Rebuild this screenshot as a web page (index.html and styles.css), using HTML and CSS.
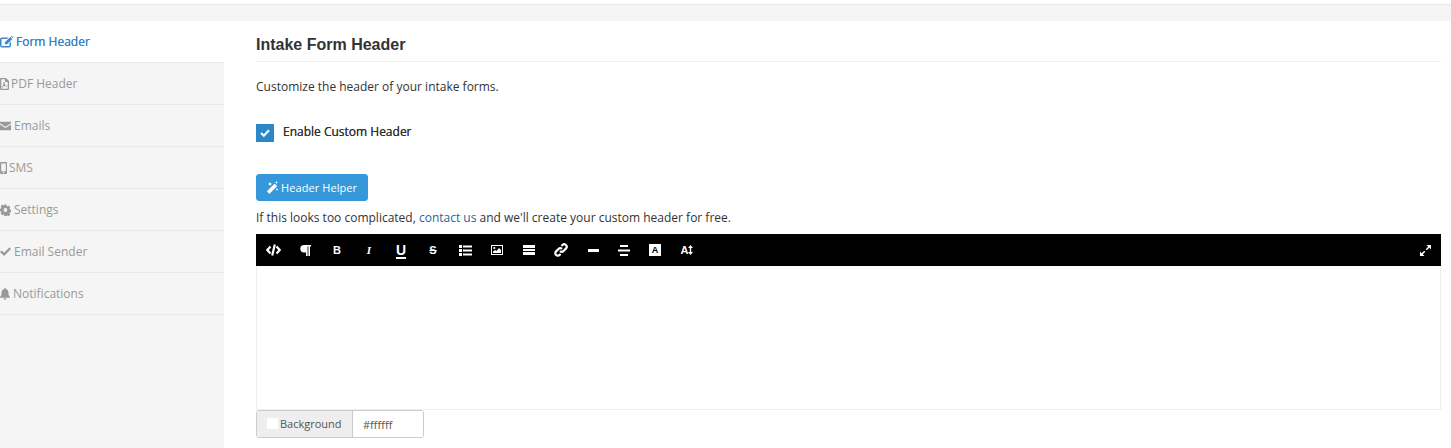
FILE: index.html
```html
<!DOCTYPE html>
<html lang="en">
<head>
  <meta charset="UTF-8" />
  <meta name="viewport" content="width=device-width, initial-scale=1" />
  <title>Intake Form Header</title>
  <link rel="stylesheet" href="styles.css">
</head>
<body>

  <div class="topbar"></div>

  <div class="page">

    <!-- Sidebar -->
    <ul class="side-nav">
      <li class="active">
        <svg class="side-icon" width="13" height="12" viewBox="0 0 13 12"><path fill-rule="evenodd" d="M2 1.500h6.500L7 3H2a.5.5 0 0 0-.5.500v6A.5.500 0 0 0 2 10h7a.5.500 0 0 0 .5-.500V7l1.500-1.500V9.500A2 2 0 0 1 9 11.500H2a2 2 0 0 1-2-2v-6a2 2 0 0 1 2-2z"/><path d="M10.300.9l2 2L7 8.300H4.900V6.200zM10.900.3l.3-.3h.8l1 1v.8l-.3.3z"/></svg>
        <span>Form Header</span>
      </li>
      <li class="gap-tight">
        <svg class="side-icon" width="9" height="12" viewBox="0 0 9 12"><path fill-rule="evenodd" d="M1 0h5l3 3v8a1 1 0 0 1-1 1H1a1 1 0 0 1-1-1V1a1 1 0 0 1 1-1zm.3 1.300v9.400h6.400V4H5V1.300zM4.500 4.500c.6 0 .6 1 .3 2 .4.800 1 1.200 1.600 1.300.4 0 .6.300.4.600-.3.400-1.200.1-2-.5-.7.100-1.300.3-1.800.5-.5 1-1 1.400-1.300 1.100-.3-.4.300-1 1-1.400.3-.6.600-1.200.8-1.800-.3-.9-.3-2.300 0-2.300z"/></svg>
        <span>PDF Header</span>
      </li>
      <li>
        <svg class="side-icon" width="11" height="12" viewBox="0 0 11 12"><path d="M0 1.800h11v1.400L5.500 6.800 0 3.200zM0 4.400l5.500 3.600L11 4.400v5.800H0z"/></svg>
        <span>Emails</span>
      </li>
      <li class="gap-tight">
        <svg class="side-icon" width="7" height="12" viewBox="0 0 7 12"><path fill-rule="evenodd" d="M1 0h5a1 1 0 0 1 1 1v10a1 1 0 0 1-1 1H1a1 1 0 0 1-1-1V1a1 1 0 0 1 1-1zm.2 1.500v7.800h4.600V1.500zM3.500 9.800a.8.800 0 1 0 0 1.600.8.800 0 0 0 0-1.600z"/></svg>
        <span>SMS</span>
      </li>
      <li>
        <svg class="side-icon" width="11" height="12" viewBox="0 0 11 12"><path fill-rule="evenodd" d="M4.300.5h2.400l.3 1.500.9.400 1.300-.8 1.600 1.600-.8 1.300.4.900 1.500.3v2.400l-1.500.3-.4.900.8 1.300-1.600 1.600-1.300-.8-.9.400-.3 1.500H4.300L4 10.800l-.9-.4-1.300.8L.2 9.600 1 8.300.6 7.400-.9 7.100V4.700l1.500-.3L1 3.500.2 2.200 1.800.6l1.300.8.900-.4zM5.500 4a2 2 0 1 0 0 4 2 2 0 0 0 0-4z" transform="translate(.5 0) scale(.9 1)"/></svg>
        <span>Settings</span>
      </li>
      <li>
        <svg class="side-icon" width="11" height="12" viewBox="0 0 11 12"><path d="M0 6l1.600-1.600L4 6.800 9.400 1.500 11 3.100 4 10z"/></svg>
        <span>Email Sender</span>
      </li>
      <li>
        <svg class="side-icon" width="10" height="12" viewBox="0 0 10 12"><path d="M5 0a.8.800 0 0 1 .8.900C7.600 1.300 8.500 2.800 8.500 5c0 2.200.6 3.200 1.500 4v.8H0V9c.9-.8 1.500-1.800 1.500-4 0-2.200.9-3.700 2.700-4.100A.8.800 0 0 1 5 0zM3.700 10.300h2.600A1.300 1.300 0 0 1 5 11.800a1.300 1.300 0 0 1-1.300-1.500z"/></svg>
        <span>Notifications</span>
      </li>
    </ul>

    <!-- Main -->
    <div class="content">
      <h2 class="title">Intake Form Header</h2>
      <p class="intro">Customize the header of your intake forms.</p>

      <div class="check-row">
        <span class="checkbox">
          <svg width="10" height="8" viewBox="0 0 10 8"><path d="M1 4l2.800 2.800L9 1.300" fill="none" stroke="#fff" stroke-width="2"/></svg>
        </span>
        <label>Enable Custom Header</label>
      </div>

      <button class="helper-btn">
        <svg width="13" height="13" viewBox="0 0 13 13" fill="#fff"><path d="M9 3l1.800 1.800a.6.6 0 0 1 0 .8L3.800 12.600a.6.600 0 0 1-.8 0L1.200 10.800a.6.600 0 0 1 0-.8L8.200 3a.6.600 0 0 1 .8 0z"/><path d="M4 1l.7 1.300L6 3l-1.300.7L4 5l-.7-1.300L2 3l1.300-.7zM10.500 0l.5.9.9.5-.9.500-.5.900-.5-.9-.9-.5.9-.5zM11 7l.5.9.9.500-.9.500-.5.900-.5-.9-.9-.5.900-.5z"/></svg>
        Header Helper
      </button>

      <p class="help">If this looks too complicated, <a href="#">contact us</a> and we'll create your custom header for free.</p>

      <!-- Editor -->
      <div class="toolbar">
        <span class="tool"><svg width="15" height="12" viewBox="0 0 15 12"><path d="M4.500 2.500L1.300 6l3.200 3.500M10.500 2.500L13.700 6l-3.200 3.500M8.800.5L6.200 11.500" fill="none" stroke="#fff" stroke-width="2.200"/></svg></span>
        <span class="tool"><svg width="11" height="11" viewBox="0 0 11 11" fill="#fff"><path d="M4 0h7v1.600h-1V11H8.400V1.600H7.600V11H6V7.400H4A3.700 3.700 0 0 1 4 0z"/></svg></span>
        <span class="tool tool-letter tool-bold">B</span>
        <span class="tool tool-letter tool-italic">I</span>
        <span class="tool tool-letter tool-under">U</span>
        <span class="tool tool-letter tool-strike">S</span>
        <span class="tool"><svg width="13" height="11" viewBox="0 0 13 11" fill="#fff"><path d="M0 0h3v3H0zM0 4h3v3H0zM0 8h3v3H0zM4 .5h9v2H4zM4 4.500h9v2H4zM4 8.500h9v2H4z"/></svg></span>
        <span class="tool"><svg width="12" height="10" viewBox="0 0 12 10"><path fill="#fff" fill-rule="evenodd" d="M0 0h12v10H0zm1 1v8h10V1z"/><path fill="#fff" d="M2 8V6.500L4 5l1.500 1L8 3l2 2v3z"/><circle cx="3.300" cy="3" r="1.100" fill="#fff"/></svg></span>
        <span class="tool"><svg width="12" height="10" viewBox="0 0 12 10" fill="#fff"><path d="M0 0h12v3H0zM0 4h12v2H0zM0 7h12v3H0z"/></svg></span>
        <span class="tool"><svg width="14" height="14" viewBox="0 0 14 14" fill="none" stroke="#fff" stroke-width="2.200"><path d="M6 8a2.500 2.500 0 0 0 3.500 0l2.400-2.400A2.500 2.500 0 0 0 8.400 2L7.400 3M8 6a2.500 2.500 0 0 0-3.500 0L2.100 8.400A2.500 2.500 0 0 0 5.600 12l1-1"/></svg></span>
        <span class="tool"><svg width="11" height="3" viewBox="0 0 11 3" fill="#fff"><path d="M0 0h11v3H0z"/></svg></span>
        <span class="tool tool-narrow"><svg width="12" height="11" viewBox="0 0 12 11" fill="#fff"><path d="M2 0h8v2H2zM0 4.500h12v2H0zM2 9h8v2H2z"/></svg></span>
        <span class="tool"><span class="tool-box">A</span></span>
        <span class="tool tool-letter tool-size">A<svg width="5" height="10" viewBox="0 0 5 10" fill="#fff"><path d="M2.500 0L5 3H3.200v4H5L2.500 10 0 7h1.800V3H0z"/></svg></span>
        <span class="tool tool-end"><svg width="11" height="11" viewBox="0 0 11 11" fill="#fff"><path d="M6.500 0H11v4.500L9.300 2.800 6.800 5.300 5.700 4.200l2.500-2.500zM0 6.500L1.700 8.200l2.500-2.500 1.100 1.100-2.500 2.500L4.500 11H0z"/></svg></span>
      </div>
      <div class="editor"></div>

      <div class="color-group">
        <span class="color-label"><i class="swatch"></i>Background</span>
        <input class="color-input" type="text" value="#ffffff" />
      </div>
    </div>

  </div>

</body>
</html>
```

FILE: styles.css
```css
html, body {
  height: 100%;
}

body {
  margin: 0;
  font-family: 'Open Sans', sans-serif;
  font-size: 12px;
  color: #333;
  background: #fff;
  overflow: hidden;
}

.topbar {
  height: 16px;
  margin-top: 4px;
  border-top: 1px solid #e9e9e9;
  background: #f5f5f5;
}

.page {
  display: flex;
  height: 427px;
}

/* Sidebar */
.side-nav {
  width: 224px;
  flex: none;
  margin: 0;
  padding: 0;
  list-style: none;
  background: #f5f5f5;
}

.side-nav li {
  display: flex;
  align-items: center;
  gap: 3px;
  height: 41px;
  border-bottom: 1px solid #e9e9e9;
  color: #999;
  fill: #999;
}

.side-nav li.gap-tight {
  gap: 2px;
}

.side-nav li.active {
  background: #fff;
  color: #3d80c4;
  fill: #3d87c8;
  text-shadow: 0 0 0.4px #3d80c4;
}

.side-icon {
  flex: none;
}

/* Main */
.content {
  flex: 1;
  padding: 0 10px 0 32px;
}

.title {
  margin: 0;
  padding: 15px 0 7px;
  font-family: 'Liberation Sans', sans-serif;
  font-size: 16px;
  line-height: 18px;
  font-weight: bold;
  color: #333;
  border-bottom: 1px solid #eee;
}

.intro {
  margin: 16px 0 0;
  line-height: 18px;
}

.check-row {
  display: flex;
  align-items: center;
  gap: 9px;
  margin-top: 28px;
  height: 18px;
}

.check-row label {
  margin-top: -3px;
  text-shadow: 0 0 0.4px #333;
}

.checkbox {
  display: flex;
  align-items: center;
  justify-content: center;
  width: 18px;
  height: 18px;
  background: #2a88c8;
}

.helper-btn {
  display: flex;
  align-items: center;
  gap: 2px;
  width: 112px;
  height: 27px;
  margin-top: 32px;
  padding: 0 0 0 9px;
  font-family: inherit;
  font-size: 11px;
  letter-spacing: 0.08px;
  color: #fff;
  background: #3498db;
  border: 1px solid #3498db;
  border-radius: 3px;
}

.help {
  margin: 8px 0 7px;
  line-height: 18px;
}

.help a {
  color: #2a6496;
  text-decoration: none;
}

/* Editor */
.toolbar {
  display: flex;
  align-items: center;
  height: 32px;
  padding-left: 1px;
  background: #000;
}

.tool {
  display: flex;
  align-items: center;
  justify-content: center;
  width: 32px;
  height: 32px;
  color: #fff;
}

.tool-narrow {
  width: 30px;
}

.tool-end {
  margin-left: auto;
}

.tool-letter {
  font-family: 'Liberation Sans', sans-serif;
  font-size: 11px;
  font-weight: bold;
}

.tool-italic {
  font-family: 'Liberation Serif', serif;
  font-style: italic;
}

.tool-under {
  font-size: 14px;
  text-decoration: underline;
  text-decoration-thickness: 2px;
  text-underline-offset: 2px;
}

.tool-strike {
  font-size: 11px;
  text-decoration: line-through;
}

.tool-box {
  width: 12px;
  height: 12px;
  font-family: 'Liberation Sans', sans-serif;
  font-size: 9px;
  font-weight: bold;
  line-height: 12px;
  text-align: center;
  color: #000;
  background: #fff;
}

.editor {
  height: 143px;
  border: 1px solid #eee;
  border-top: none;
}

.color-group {
  display: flex;
  width: 168px;
  height: 28px;
  box-sizing: border-box;
  border: 1px solid #ccc;
  border-radius: 3px;
  overflow: hidden;
}

.color-label {
  display: flex;
  align-items: center;
  width: 96px;
  flex: none;
  box-sizing: border-box;
  padding: 0 0 2px 10px;
  font-size: 11px;
  color: #555;
  background: #eee;
  border-right: 1px solid #ccc;
}

.swatch {
  width: 11px;
  height: 11px;
  margin-right: 2px;
  background: #fff;
}

.color-input {
  flex: 1;
  min-width: 0;
  padding: 0 0 0 10px;
  font-family: inherit;
  font-size: 11px;
  color: #555;
  border: none;
  outline: none;
}
```
